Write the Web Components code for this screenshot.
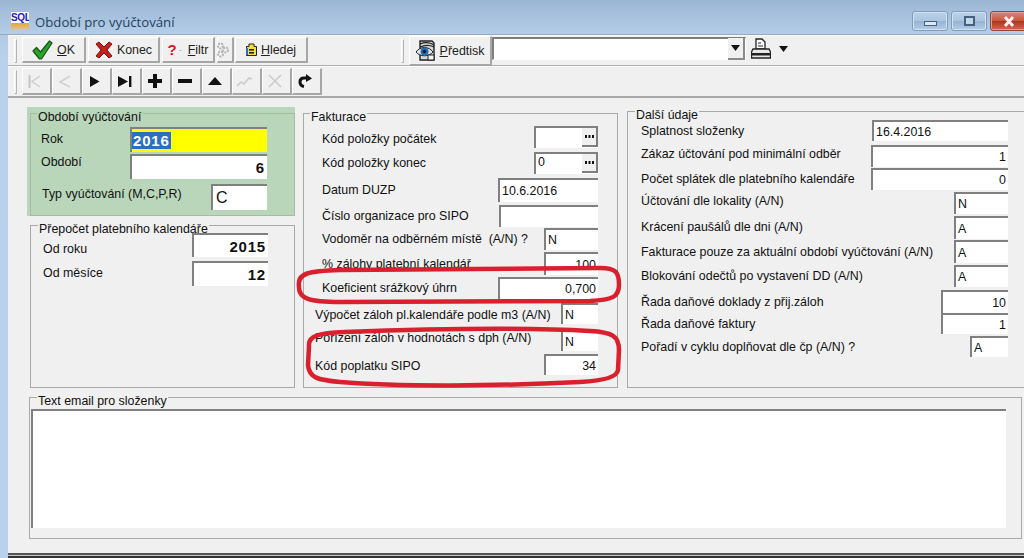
<!DOCTYPE html>
<html lang="cs">
<head>
<meta charset="utf-8">
<title>Období pro vyúčtování</title>
<style>
    html, body { margin: 0; height: 100%; overflow: hidden; background: #f0f0f0; }
    body { font: 12.4px "Liberation Sans", Arial, sans-serif; color: #111; }
    .columns { display: flex; align-items: flex-start; }
</style>
</head>
<body>
<app-window>
    <win-title slot="title">Období pro vyúčtování</win-title>

    <tool-strip slot="bars" h="31">
        <tool-btn w="64" h="26" icon="ok"><u>O</u>K</tool-btn>
        <tool-btn w="72" h="26" gap="2" icon="no">Konec</tool-btn>
        <tool-btn w="53" h="26" gap="2" icon="help"><u>F</u>iltr</tool-btn>
        <tool-btn w="17" h="26" gap="2" icon="chain"></tool-btn>
        <tool-btn w="73" h="26" gap="1" icon="find"><u>H</u>ledej</tool-btn>
        <strip-grip style="margin-left:93px"></strip-grip>
        <tool-btn w="83" h="30" up="1" icon="eye"><u>P</u>ředtisk</tool-btn>
        <combo-box></combo-box>
        <print-tool></print-tool>
    </tool-strip>
    <tool-strip slot="bars" h="30" last>
        <tool-btn w="30" h="27" icon="first"></tool-btn>
        <tool-btn w="30" h="27" icon="prev"></tool-btn>
        <tool-btn w="30" h="27" icon="next"></tool-btn>
        <tool-btn w="30" h="27" icon="last"></tool-btn>
        <tool-btn w="30" h="27" icon="plus"></tool-btn>
        <tool-btn w="30" h="27" icon="minus"></tool-btn>
        <tool-btn w="30" h="27" icon="up"></tool-btn>
        <tool-btn w="30" h="27" icon="apply"></tool-btn>
        <tool-btn w="30" h="27" icon="cancel"></tool-btn>
        <tool-btn w="30" h="27" icon="reload"></tool-btn>
    </tool-strip>

    <div class="columns" style="margin-left:19px;margin-top:9px">
        <div style="width:268px;flex:none">
            <green-panel>
                <group-box legend="Období vyúčtování" h="103" lx="6" tone="#b9d6ba" line="#9fbf9f">
                    <form-row pl="10" pr="27" gap="7" ly="-1">Rok<text-field slot="field" w="137" h="25" selected>2016</text-field></form-row>
                    <form-row pl="10" pr="27" gap="2" ly="-5">Období<text-field slot="field" w="137" h="25" num bold>6</text-field></form-row>
                    <form-row pl="11" pr="27" gap="5" ly="-3">Typ vyúčtování (M,C,P,R)<text-field slot="field" w="56" h="26" big>C</text-field></form-row>
                </group-box>
            </green-panel>
            <group-box legend="Přepočet platebního kalendáře" h="163" lx="7" style="margin:9px 0 0 3px">
                <form-row pl="12" pr="26" gap="1" ly="4">Od roku<text-field slot="field" w="76" h="24" num bold>2015</text-field></form-row>
                <form-row pl="12" pr="26" gap="4" ly="-1">Od měsíce<text-field slot="field" w="76" h="25" num bold>12</text-field></form-row>
            </group-box>
        </div>

        <group-box legend="Fakturace" w="315" h="275" lx="6" style="margin:6px 0 0 8px">
            <form-row pl="18" pr="19" gap="6" ly="2">Kód položky počátek<text-field slot="field" w="64" h="22" more></text-field></form-row>
            <form-row pl="18" pr="19" gap="4">Kód položky konec<text-field slot="field" w="64" h="22" more>0</text-field></form-row>
            <form-row pl="18" pr="19" gap="4">Datum DUZP<text-field slot="field" w="100" h="24">10.6.2016</text-field></form-row>
            <form-row pl="18" pr="19" gap="3">Číslo organizace pro SIPO<text-field slot="field" w="99" h="22"></text-field></form-row>
            <form-row pl="18" pr="19" gap="1">Vodoměr na odběrném místě&nbsp; (A/N) ?<text-field slot="field" w="54" h="22">N</text-field></form-row>
            <form-row pl="18" pr="19" gap="2">% zálohy platební kalendář<text-field slot="field" w="54" h="23" num>100</text-field></form-row>
            <form-row pl="18" pr="19" gap="2">Koeficient srážkový úhrn<text-field slot="field" w="100" h="22" num>0,700</text-field></form-row>
            <form-row pl="11" pr="19" gap="4" ly="1">Výpočet záloh pl.kalendáře podle m3 (A/N)<text-field slot="field" w="37" h="21">N</text-field></form-row>
            <form-row pl="11" pr="19" gap="6" ly="-3">Pořízení záloh v hodnotách s dph (A/N)<text-field slot="field" w="37" h="21">N</text-field></form-row>
            <form-row pl="11" pr="19" gap="3" ly="1">Kód poplatku SIPO<text-field slot="field" w="54" h="21" num>34</text-field></form-row>
        </group-box>

        <group-box legend="Další údaje" w="400" h="277" lx="7" style="margin:4px 0 0 9px">
            <form-row pl="13" pr="18" gap="2">Splatnost složenky<text-field slot="field" w="136" h="21">16.4.2016</text-field></form-row>
            <form-row pl="13" pr="18" gap="4" ly="-2">Zákaz účtování pod minimální odběr<text-field slot="field" w="137" h="22" num>1</text-field></form-row>
            <form-row pl="13" pr="18" gap="1">Počet splátek dle platebního kalendáře<text-field slot="field" w="137" h="22" num>0</text-field></form-row>
            <form-row pl="13" pr="18" gap="2" ly="-2">Účtování dle lokality (A/N)<text-field slot="field" w="54" h="22">N</text-field></form-row>
            <form-row pl="13" pr="18" gap="2" ly="-1">Krácení paušálů dle dni (A/N)<text-field slot="field" w="54" h="23">A</text-field></form-row>
            <form-row pl="13" pr="18" gap="1">Fakturace pouze za aktuální období vyúčtování (A/N)<text-field slot="field" w="54" h="23">A</text-field></form-row>
            <form-row pl="13" pr="18" gap="2">Blokování odečtů po vystavení DD (A/N)<text-field slot="field" w="54" h="22">A</text-field></form-row>
            <form-row pl="13" pr="18" gap="3">Řada daňové doklady z přij.záloh<text-field slot="field" w="67" h="23" num>10</text-field></form-row>
            <form-row pl="13" pr="18" gap="0">Řada daňové faktury<text-field slot="field" w="67" h="21" num>1</text-field></form-row>
            <form-row pl="13" pr="18" gap="2">Pořadí v cyklu doplňovat dle čp (A/N) ?<text-field slot="field" w="38" h="21">A</text-field></form-row>
        </group-box>
    </div>

    <group-box legend="Text email pro složenky" w="993" h="142" lx="7" style="margin:9px 0 0 21px">
        <memo-box></memo-box>
    </group-box>

    <status-edge slot="foot"></status-edge>
    <red-marks slot="over"></red-marks>
</app-window>

<script>
// Ikony tlacitek na liste
const ICONS = {
    ok: '<svg width="21" height="20" viewBox="0 0 21 20"><path d="M1 11 4.5 7.5 8.5 12 17.5 1 20 3 9.5 19 7.5 19Z" fill="#26a526" stroke="#16541a" stroke-width="1.2" stroke-linejoin="round"/></svg>',
    no: '<svg width="18" height="18" viewBox="0 0 18 18"><path d="M1 3 4 1 9 6 14 1 17 3 12 9 17 15 14 17 9 12 4 17 1 15 6 9Z" fill="#c4201c" stroke="#6e1512" stroke-width="1" stroke-linejoin="round"/></svg>',
    help: '<span style="color:#d4181f;font:bold 15px Liberation Sans,sans-serif;line-height:16px">?</span><span style="color:#5b7fb0;font-size:9px;margin:0 2px">·</span>',
    chain: '<svg width="12" height="16" viewBox="0 0 12 16"><g fill="none" stroke="#b4b4b4" stroke-width="2" stroke-dasharray="2 1"><circle cx="3.5" cy="4" r="2.5"/><circle cx="8.5" cy="8" r="2.5"/><circle cx="3.5" cy="12" r="2.5"/></g></svg>',
    find: '<svg width="11" height="13" viewBox="0 0 11 13"><path d="M.5 3.5H3V1H8V3.5H10.5V12.5H.5Z" fill="#f0e040" stroke="#222"/><rect x="3" y="6" width="5" height="1.6" fill="#222"/><rect x="3" y="9" width="5" height="1.6" fill="#222"/><rect x="0" y="5" width="2" height="7" fill="#2a70b8"/></svg>',
    eye: '<svg width="20" height="22" viewBox="0 0 20 22"><path d="M4 1H16L18 3V20H4Z" fill="#d8d8d8" stroke="#222" stroke-width="1.4"/><path d="M4 4C9 2 14 2 18 5M4 7C9 5 14 5 18 7" fill="none" stroke="#222" stroke-width="1.2"/><path d="M0 12C4 6 13 6 17 12 13 17 4 17 0 12Z" fill="#e4e4e4" stroke="#222"/><circle cx="8.5" cy="11.5" r="4" fill="#1f6fb5"/><circle cx="8.5" cy="11.5" r="1.7" fill="#101830"/><rect x="12" y="15" width="6" height="5" fill="#f4f4f4" stroke="#222"/></svg>',
    first: '<svg width="15" height="15" viewBox="0 0 15 15"><path d="M2.5 1V14" stroke="#c4c4c4" stroke-width="2"/><path d="M13 2 5 7.500 13 13" fill="none" stroke="#cecece" stroke-width="1.5"/></svg>',
    prev: '<svg width="13" height="13" viewBox="0 0 13 13"><path d="M12 1 2 7 12 12" fill="none" stroke="#d0d0d0" stroke-width="1.5"/></svg>',
    next: '<svg width="11" height="11" viewBox="0 0 11 11"><path d="M1 0 10.5 5.5 1 11Z" fill="#111"/></svg>',
    last: '<svg width="14" height="11" viewBox="0 0 14 11"><path d="M0 0 10 5.5 0 11Z" fill="#111"/><rect x="11" y="0" width="2.4" height="11" fill="#111"/></svg>',
    plus: '<svg width="14" height="14" viewBox="0 0 14 14"><path d="M5 0H9V5H14V9H9V14H5V9H0V5H5Z" fill="#111"/></svg>',
    minus: '<svg width="14" height="4" viewBox="0 0 14 4"><rect width="14" height="4" fill="#111"/></svg>',
    up: '<svg width="14" height="8" viewBox="0 0 14 8"><path d="M7 0 14 8H0Z" fill="#111"/></svg>',
    apply: '<svg width="17" height="11" viewBox="0 0 17 11"><path d="M1 10 5 6 8 8 13 2 16 3" fill="none" stroke="#cccccc" stroke-width="1.6"/></svg>',
    cancel: '<svg width="14" height="14" viewBox="0 0 14 14"><path d="M1 1 13 13M13 1 1 13" stroke="#cccccc" stroke-width="1.6"/></svg>',
    reload: '<svg width="14" height="14" viewBox="0 0 14 14"><path d="M9.5 4H6C3.5 4 2 5.500 2 8S3.500 12 6 12.500" fill="none" stroke="#111" stroke-width="3"/><path d="M8 0 14 4.500 8 8Z" fill="#111"/></svg>'
};

class AppWindow extends HTMLElement {
    constructor() {
        super();
        this.attachShadow({mode: 'open'}).innerHTML = `
            <style>
                :host { display: flex; flex-direction: column; width: 1024px; height: 558px; overflow: hidden; position: relative;
                    background: linear-gradient(#a9c3de, #b9d1ea 60px, #b9d1ea); }
                .face { flex: 1; margin-left: 8px; background: #f0f0f0; display: flex; flex-direction: column; min-height: 0; }
                .grow { flex: 1; }
            </style>
            <slot name="title"></slot>
            <div class="face">
                <slot name="bars"></slot>
                <div class="grow"><slot></slot></div>
                <slot name="foot"></slot>
            </div>
            <slot name="over"></slot>`;
    }
}

class WinTitle extends HTMLElement {
    constructor() {
        super();
        this.attachShadow({mode: 'open'}).innerHTML = `
            <style>
                :host { display: flex; height: 35px; box-sizing: border-box; align-items: flex-start; flex: none;
                    background: linear-gradient(#9bb6d4, #b4cde8); border-bottom: 1px solid #9aa9b8; }
                .logo { width: 18px; height: 18px; margin: 12px 6px 0 11px; background: linear-gradient(#fff 62%, #e8a33c 62%, #d8c8a0);
                    font: bold 10px/11px "Liberation Sans", sans-serif; color: #1a22b8; text-align: center; letter-spacing: -.4px; overflow: hidden; }
                .text { margin-top: 13px; font: 13.2px/18px "Open Sans", sans-serif; color: #24415f; }
                .btns { margin: 11px -4px 0 auto; display: flex; gap: 3px; }
                .btn { width: 36px; height: 20px; box-sizing: border-box; border: 1px solid #7f9dbd; border-radius: 3px;
                    background: linear-gradient(#bcd2e9, #aac5e0 50%, #95b3d2 52%, #b4cde6); box-shadow: inset 0 0 0 1px #d4e2f0;
                    display: flex; align-items: center; justify-content: center; }
                .btn.x { background: linear-gradient(#d88a78, #c8553f 50%, #b03420 52%, #cf6a50); border-color: #8a4a40; box-shadow: inset 0 0 0 1px #e0a090; width: 38px; }
            </style>
            <div class="logo">SQL</div>
            <div class="text"><slot></slot></div>
            <div class="btns">
                <div class="btn"><svg width="13" height="5" viewBox="0 0 13 5" style="margin-top:5px"><rect x=".5" y=".5" width="12" height="4" fill="#dfe8f2" stroke="#46617e"/></svg></div>
                <div class="btn"><svg width="11" height="10" viewBox="0 0 11 10"><rect x="1" y="1" width="9" height="8" fill="#c4d6e8" stroke="#46617e" stroke-width="2"/></svg></div>
                <div class="btn x"><svg width="12" height="11" viewBox="0 0 12 11"><path d="M2 1 10 10M10 1 2 10" stroke="#f4f0f0" stroke-width="3"/></svg></div>
            </div>`;
    }
}

class StripGrip extends HTMLElement {
    constructor() {
        super();
        this.attachShadow({mode: 'open'}).innerHTML = `
            <style>
                :host { display: block; width: 3px; height: 24px; margin-right: 5px; align-self: center; flex: none;
                    border: 1px solid #b4b4b4; border-top-color: #fff; border-left-color: #fff; box-sizing: border-box; }
            </style>`;
    }
}

class ToolStrip extends HTMLElement {
    constructor() {
        super();
        const h = this.getAttribute('h');
        this.attachShadow({mode: 'open'}).innerHTML = `
            <style>
                :host { display: flex; flex: none; align-items: flex-start; height: ${h}px; padding: 2px 0 0 6px; box-sizing: border-box;
                    border-bottom: 1px solid #b0b0b0; box-shadow: inset 0 1px 0 #fafafa; }
                :host([last]) { border-bottom: 2px solid #a8a8a8; height: 32px; }
            </style>
            <strip-grip></strip-grip>
            <slot></slot>`;
    }
}

class ToolBtn extends HTMLElement {
    constructor() {
        super();
        const w = this.getAttribute('w');
        const h = this.getAttribute('h');
        const gap = this.getAttribute('gap') || 0;
        const up = this.getAttribute('up') || 0;
        const icon = ICONS[this.getAttribute('icon')] || '';
        this.attachShadow({mode: 'open'}).innerHTML = `
            <style>
                :host { display: flex; align-items: center; justify-content: center; gap: 4px; flex: none; box-sizing: border-box;
                    width: ${w}px; height: ${h}px; margin-left: ${gap}px; margin-top: -${up}px;
                    background: #f0f0f0; border: solid; border-width: 1px 2px 2px 1px; border-color: #fff #a6a6a6 #a6a6a6 #fff; color: #222; white-space: nowrap; }
                .i { display: flex; align-items: center; }
            </style>
            <span class="i">${icon}</span><span><slot></slot></span>`;
    }
}

class ComboBox extends HTMLElement {
    constructor() {
        super();
        this.attachShadow({mode: 'open'}).innerHTML = `
            <style>
                :host { display: flex; justify-content: flex-end; align-items: center; flex: none; width: 254px; height: 23px; box-sizing: border-box;
                    background: #fff; border: solid; border-width: 2px 1px 1px 2px; border-color: #7e7e7e #fff #fff #7e7e7e; }
                .b { width: 17px; height: 22px; box-sizing: border-box; background: #f0f0f0; border: solid; border-width: 0 2px 2px 0; border-color: #8a8a8a;
                    display: flex; align-items: center; justify-content: center; }
            </style>
            <div class="b"><svg width="9" height="6" viewBox="0 0 9 6"><path d="M0 0H9L4.500 6Z" fill="#111"/></svg></div>`;
    }
}

class PrintTool extends HTMLElement {
    constructor() {
        super();
        this.attachShadow({mode: 'open'}).innerHTML = `
            <style>
                :host { display: flex; align-items: center; flex: none; height: 24px; margin-left: 5px; gap: 8px; }
            </style>
            <svg width="20" height="22" viewBox="0 0 20 22"><path d="M5 1H11L14 4V11H5Z" fill="#fff" stroke="#222" stroke-width="1.3"/><path d="M7 5H10M7 8H12" stroke="#222"/><path d="M2 11H18L19.500 14V20H.5V14Z" fill="#e8e8e8" stroke="#222" stroke-width="1.3"/><rect x="1" y="15" width="18" height="2.500" fill="#222"/></svg>
            <svg width="9" height="6" viewBox="0 0 9 6"><path d="M0 0H9L4.500 6Z" fill="#111"/></svg>`;
    }
}

class GreenPanel extends HTMLElement {
    constructor() {
        super();
        this.attachShadow({mode: 'open'}).innerHTML = `
            <style>
                :host { display: block; background: #b9d6ba; padding: 6px 0 1px 3px; height: 109px; box-sizing: border-box; }
            </style>
            <slot></slot>`;
    }
}

class GroupBox extends HTMLElement {
    constructor() {
        super();
        const w = this.getAttribute('w');
        const tone = this.getAttribute('tone') || '#f0f0f0';
        const line = this.getAttribute('line') || '#a9a9a9';
        this.attachShadow({mode: 'open'}).innerHTML = `
            <style>
                :host { display: block; box-sizing: border-box; flex: none; height: ${this.getAttribute('h')}px; ${w ? `width: ${w}px;` : ''}
                    border: 1px solid ${line}; }
                .legend { width: fit-content; margin: -5px 0 0 ${this.getAttribute('lx')}px; padding: 0 1px; height: 11px; line-height: 17px; background: ${tone}; color: #111; white-space: nowrap; }
            </style>
            <div class="legend">${this.getAttribute('legend')}</div>
            <slot></slot>`;
    }
}

class FormRow extends HTMLElement {
    constructor() {
        super();
        const a = (n, d) => this.getAttribute(n) || d;
        this.attachShadow({mode: 'open'}).innerHTML = `
            <style>
                :host { display: flex; justify-content: space-between; align-items: center; white-space: nowrap;
                    margin-top: ${a('gap', 0)}px; padding: 0 ${a('pr', 0)}px 0 ${a('pl', 0)}px; }
                .l { line-height: 14px; margin-top: ${a('ly', 0) * 2}px; }
            </style>
            <div class="l"><slot></slot></div>
            <slot name="field"></slot>`;
    }
}

class TextField extends HTMLElement {
    constructor() {
        super();
        const has = n => this.hasAttribute(n);
        const more = has('more') ? `<div class="more"><svg width="9" height="3" viewBox="0 0 9 3"><path d="M0 0h2v3H0zM3.500 0h2v3h-2zM7 0h2v3H7z" fill="#111"/></svg></div>` : '';
        this.attachShadow({mode: 'open'}).innerHTML = `
            <style>
                :host { display: flex; flex: none; box-sizing: border-box; width: ${this.getAttribute('w')}px; height: ${this.getAttribute('h')}px;
                    background: #fff; border: solid; border-width: 2px 0 0 2px; border-color: #808080; color: #111;
                    justify-content: ${has('num') ? 'flex-end' : 'flex-start'}; padding: 0 2px 0 2px; align-items: center; }
                :host([selected]) { background: #ffff00; padding-left: 0; }
                :host([selected]) .v { background: #2a6fc4; color: #fff; font: bold 15px "Liberation Sans", sans-serif; letter-spacing: .8px; padding: 0 1px; line-height: 17px; }
                :host([bold]) .v { font: bold 15px "Liberation Sans", sans-serif; letter-spacing: .8px; }
                :host([big]) .v { font-size: 16px; padding-left: 1px; }
                :host([more]) { padding-right: 0; align-items: stretch; }
                :host([more]) .v { flex: 1; line-height: 16px; }
                .more { width: 16px; height: 19px; box-sizing: border-box; background: #f0f0f0; border: solid; border-width: 0 2px 2px 0; border-color: #7e7e7e;
                    display: flex; align-items: center; justify-content: center; }
            </style>
            <div class="v"><slot></slot></div>${more}`;
    }
}

class MemoBox extends HTMLElement {
    constructor() {
        super();
        this.attachShadow({mode: 'open'}).innerHTML = `
            <style>
                :host { display: block; box-sizing: border-box; width: 975px; height: 119px; margin: 5px 0 0 1px;
                    background: #fff; border: solid; border-width: 2px 0 0 2px; border-color: #808080; }
            </style>`;
    }
}

class StatusEdge extends HTMLElement {
    constructor() {
        super();
        this.attachShadow({mode: 'open'}).innerHTML = `
            <style>
                :host { display: block; flex: none; height: 5px; box-sizing: border-box; background: #c8c8c8;
                    border-top: 2px solid #555; border-bottom: 2px solid #333; }
            </style>`;
    }
}

// Cervene rucne kreslene ovaly pres formular
class RedMarks extends HTMLElement {
    constructor() {
        super();
        this.attachShadow({mode: 'open'}).innerHTML = `
            <style>
                :host { display: block; position: absolute; left: 0; top: 0; width: 1024px; height: 558px; pointer-events: none; }
            </style>
            <svg width="1024" height="558" viewBox="0 0 1024 558" fill="none" stroke="#d9202e" stroke-width="4.500" stroke-linecap="round">
                <path d="M299 286C297 273 309 271 340 270L600 268C616 268 619 272 619 285 619 297 612 300 590 301L340 302C310 302 298 299 299 286Z"/>
                <path d="M309 346C308 336 318 333 345 332 450 328 540 328 590 331 612 332 619 336 619 350L618 370C617 378 600 381 580 382 500 386 400 387 340 382 318 380 309 378 308 365Z"/>
            </svg>`;
    }
}

customElements.define('strip-grip', StripGrip);
customElements.define('tool-btn', ToolBtn);
customElements.define('combo-box', ComboBox);
customElements.define('print-tool', PrintTool);
customElements.define('tool-strip', ToolStrip);
customElements.define('win-title', WinTitle);
customElements.define('green-panel', GreenPanel);
customElements.define('group-box', GroupBox);
customElements.define('form-row', FormRow);
customElements.define('text-field', TextField);
customElements.define('memo-box', MemoBox);
customElements.define('status-edge', StatusEdge);
customElements.define('red-marks', RedMarks);
customElements.define('app-window', AppWindow);
</script>
</body>
</html>
